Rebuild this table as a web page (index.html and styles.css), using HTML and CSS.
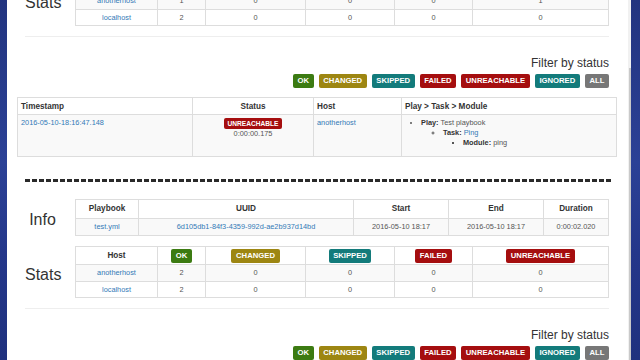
FILE: index.html
```html
<!DOCTYPE html>
<html>
<head>
<meta charset="utf-8">
<link rel="stylesheet" href="styles.css">
</head>
<body>
<div class="screen">
  <div class="desk desk-left"></div>
  <main class="page">
    <div class="scroll">
      <section class="block">
        <div class="sect">
          <h2 class="sect-title">Info</h2>
          <table class="grid info">
            <tr class="head"><th class="c-pb">Playbook</th><th class="c-uuid">UUID</th><th class="c-start">Start</th><th class="c-end">End</th><th>Duration</th></tr>
            <tr class="odd"><td><a class="link">test.yml</a></td><td><a class="link">6d105db1-84f3-4359-992d-ae2b937d14bd</a></td><td>2016-05-10 18:17</td><td>2016-05-10 18:17</td><td>0:00:02.020</td></tr>
          </table>
        </div>
        <div class="sect sect-stats">
          <h2 class="sect-title">Stats</h2>
          <table class="grid stats">
            <tr class="head"><th class="c-host">Host</th><th class="c-ok"><span class="lbl ok">OK</span></th><th class="c-ch"><span class="lbl changed">CHANGED</span></th><th class="c-sk"><span class="lbl skipped">SKIPPED</span></th><th class="c-fa"><span class="lbl failed">FAILED</span></th><th><span class="lbl failed">UNREACHABLE</span></th></tr>
            <tr class="odd"><td><a class="link">anotherhost</a></td><td>1</td><td>0</td><td>0</td><td>0</td><td>1</td></tr>
            <tr><td><a class="link">localhost</a></td><td>2</td><td>0</td><td>0</td><td>0</td><td>0</td></tr>
          </table>
        </div>
        <hr class="sep">
        <div class="filter">Filter by status</div>
        <div class="labels">
          <span class="lbl ok">OK</span><span class="lbl changed">CHANGED</span><span class="lbl skipped">SKIPPED</span><span class="lbl failed">FAILED</span><span class="lbl failed">UNREACHABLE</span><span class="lbl skipped">IGNORED</span><span class="lbl all">ALL</span>
        </div>
        <table class="results">
          <tr class="rhead"><th class="c-ts">Timestamp</th><th class="c-status">Status</th><th class="c-rhost">Host</th><th>Play &gt; Task &gt; Module</th></tr>
          <tr class="rrow"><td><a class="link">2016-05-10-18:16:47.148</a></td><td class="center"><span class="lbl lbl-sm failed">UNREACHABLE</span><div>0:00:00.175</div></td><td><a class="link">anotherhost</a></td><td><ul class="tree"><li><b>Play:</b> Test playbook<ul><li><b>Task:</b> <a class="link">Ping</a><ul><li><b>Module:</b> ping</li></ul></li></ul></li></ul></td></tr>
        </table>
        <div class="divider"></div>
      </section>
      <section class="block">
        <div class="sect">
          <h2 class="sect-title">Info</h2>
          <table class="grid info">
            <tr class="head"><th class="c-pb">Playbook</th><th class="c-uuid">UUID</th><th class="c-start">Start</th><th class="c-end">End</th><th>Duration</th></tr>
            <tr class="odd"><td><a class="link">test.yml</a></td><td><a class="link">6d105db1-84f3-4359-992d-ae2b937d14bd</a></td><td>2016-05-10 18:17</td><td>2016-05-10 18:17</td><td>0:00:02.020</td></tr>
          </table>
        </div>
        <div class="sect sect-stats">
          <h2 class="sect-title">Stats</h2>
          <table class="grid stats">
            <tr class="head"><th class="c-host">Host</th><th class="c-ok"><span class="lbl ok">OK</span></th><th class="c-ch"><span class="lbl changed">CHANGED</span></th><th class="c-sk"><span class="lbl skipped">SKIPPED</span></th><th class="c-fa"><span class="lbl failed">FAILED</span></th><th><span class="lbl failed">UNREACHABLE</span></th></tr>
            <tr class="odd"><td><a class="link">anotherhost</a></td><td>2</td><td>0</td><td>0</td><td>0</td><td>0</td></tr>
            <tr><td><a class="link">localhost</a></td><td>2</td><td>0</td><td>0</td><td>0</td><td>0</td></tr>
          </table>
        </div>
        <hr class="sep">
        <div class="filter">Filter by status</div>
        <div class="labels">
          <span class="lbl ok">OK</span><span class="lbl changed">CHANGED</span><span class="lbl skipped">SKIPPED</span><span class="lbl failed">FAILED</span><span class="lbl failed">UNREACHABLE</span><span class="lbl skipped">IGNORED</span><span class="lbl all">ALL</span>
        </div>
      </section>
    </div>
  </main>
  <div class="scrollbar"><div class="thumb"></div></div>
  <div class="desk desk-right"></div>
</div>
</body>
</html>
```
FILE: styles.css
```css
html, body {
  margin: 0;
  padding: 0;
}
body {
  font-family: "Liberation Sans", Arial, sans-serif;
  color: #555;
  background: #26398a;
}
.screen {
  display: flex;
  height: 360px;
  overflow: hidden;
}
.desk {
  background: linear-gradient(180deg, #22347f 0%, #2b4196 45%, #24378a 70%, #1f317e 100%);
}
.desk-left {
  width: 7px;
  flex: none;
}
.desk-right {
  flex: 1;
}
.page {
  width: 621px;
  flex: none;
  background: #fff;
  height: 360px;
  overflow: hidden;
}
.scrollbar {
  width: 3px;
  flex: none;
  background: #f1f1f1;
  display: flex;
  flex-direction: column;
  align-items: flex-end;
}
.thumb {
  margin-top: 68px;
  width: 2px;
  flex: 1;
  background: #c9c9c9;
}
.scroll {
  margin-top: -73px;
}
.block {
  padding: 0 19px 17px 18px;
}
.sect {
  display: flex;
  align-items: center;
  gap: 15px;
}
.sect-stats {
  margin-top: 10px;
}
.sect-title {
  width: 35px;
  flex: none;
  margin: 0;
  padding-top: 5px;
  text-align: center;
  font-size: 16px;
  line-height: 18px;
  font-weight: normal;
  color: #333;
}
.grid {
  flex: 1;
  border-collapse: collapse;
  table-layout: fixed;
  width: 100%;
}
.grid th, .grid td {
  border: 1px solid #ddd;
  text-align: center;
  padding: 3px 3px;
}
.grid th {
  font-size: 8.2px;
  line-height: 12px;
  font-weight: bold;
  color: #333;
}
.grid td {
  font-size: 7.35px;
  line-height: 10px;
}
.stats th {
  padding: 1.5px 3px;
  line-height: 14px;
}
.stats td {
  line-height: 9.5px;
}
.odd td {
  background: #f9f9f9;
}
.c-pb { width: 56px; }
.c-uuid { width: 208px; }
.c-start { width: 88px; }
.c-end { width: 88px; }
.c-host { width: 75px; }
.c-ok { width: 41px; }
.c-ch { width: 93px; }
.c-sk { width: 82px; }
.c-fa { width: 71px; }
.link {
  color: #337ab7;
  text-decoration: none;
}
.lbl {
  display: inline-block;
  vertical-align: top;
  font-size: 7.7px;
  line-height: 10px;
  font-weight: bold;
  color: #fff;
  padding: 2px 4.6px;
  border-radius: 2px;
  white-space: nowrap;
}
.lbl.ok { background: #3c7b12; }
.lbl.changed { background: #9d8612; }
.lbl.skipped { background: #137b7b; }
.lbl.failed { background: #a50e0f; }
.lbl.all { background: #777; }
.lbl.lbl-sm {
  display: block;
  width: fit-content;
  margin: 0 auto;
  font-size: 6.6px;
  line-height: 8px;
  padding: 1.5px 4px;
}
.sep {
  margin: 10px 0 0 0;
  border: 0;
  border-top: 1px solid #eee;
  height: 0;
}
.filter {
  margin-top: 19px;
  text-align: right;
  font-size: 12px;
  line-height: 14px;
  color: #333;
}
.labels {
  margin-top: 4px;
  display: flex;
  justify-content: flex-end;
  gap: 5px;
}
.results {
  margin: 9px 0 0 -8px;
  width: 600px;
  border-collapse: collapse;
  table-layout: fixed;
}
.results th, .results td {
  border: 1px solid #ddd;
  text-align: left;
  vertical-align: top;
  padding: 3px 3px;
}
.results th {
  font-size: 8.2px;
  line-height: 11px;
  padding: 3px 3px 2px;
  font-weight: bold;
  color: #333;
}
.results th.c-status { text-align: center; }
.results td {
  font-size: 7.35px;
  line-height: 10px;
  background: #f9f9f9;
  padding-top: 3px;
}
.results td.center { text-align: center; }
.rrow { height: 42px; }
.c-ts { width: 168px; }
.c-status { width: 114px; }
.c-rhost { width: 81px; }
.tree {
  margin: 0;
  padding-left: 16px;
  list-style: disc;
}
.tree ul {
  margin: 0;
  padding-left: 22px;
}
.tree ul { list-style: circle; }
.tree ul ul { list-style: square; padding-left: 20px; }
.tree b { color: #333; }
.divider {
  margin: 22px -3px 0 0;
  height: 3px;
  background: repeating-linear-gradient(90deg, #2a2a2a 0 5px, transparent 5px 7px);
}
```
